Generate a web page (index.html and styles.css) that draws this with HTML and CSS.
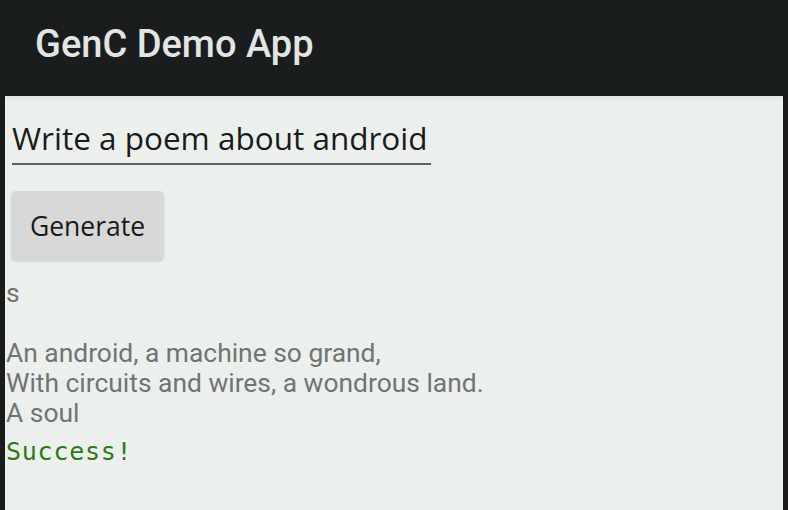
FILE: index.html
```html
<!DOCTYPE html>
<html>
<head>
<meta charset="utf-8">
<link rel="stylesheet" href="styles.css">
</head>
<body>
<header class="appbar"><h1 class="title">GenC Demo App</h1></header>
<main class="screen">
  <div class="field"><span class="field-text">Write a poem about android</span></div>
  <button class="btn">Generate</button>
  <div class="output">s

An android, a machine so grand,
With circuits and wires, a wondrous land.
A soul</div>
  <div class="status">Success!</div>
</main>
</body>
</html>
```
FILE: styles.css
```css
html, body { margin: 0; padding: 0; }
body {
  width: 788px; height: 510px; overflow: hidden;
  background: #1a1c1c;
  display: flex; flex-direction: column;
}
.appbar {
  height: 96px; flex: none;
  background: #191d1e;
  display: flex; align-items: center;
  padding-left: 35px;
  box-sizing: border-box;
}
.title {
  margin: 0;
  font-family: Roboto, sans-serif;
  font-weight: 500;
  font-size: 38px;
  color: #e2e5e3;
  letter-spacing: 0;
  position: relative; top: -4px;
}
.screen {
  flex: 1;
  margin: 0 5px;
  background: linear-gradient(#e1e5e2, #ecf0ed 6px);
  display: flex; flex-direction: column; align-items: flex-start;
}
.field {
  margin: 22px 0 0 7px;
  width: 419px;
  border-bottom: 2px solid #5c615f;
  padding-bottom: 5px;
}
.field-text {
  font-family: "Open Sans", sans-serif;
  font-size: 31.5px;
  color: #191c1b;
  line-height: 40px;
  display: block;
  white-space: nowrap;
}
.btn {
  margin: 26px 0 0 6px;
  width: 153px; height: 70px;
  border: none; border-radius: 5px;
  background: #d7d9d8;
  box-shadow: 0 1px 2px rgba(0,0,0,0.12);
  font-family: "Open Sans", sans-serif;
  font-size: 26.5px;
  color: #181b1a;
  padding: 0;
}
.output {
  margin: 17px 0 0 1px;
  white-space: pre;
  font-family: Roboto, sans-serif;
  font-size: 26.4px;
  line-height: 30px;
  color: #6f7573;
}
.status {
  margin: 9px 0 0 1px;
  font-family: "DejaVu Sans Mono", monospace;
  font-size: 25px;
  letter-spacing: 0.75px;
  color: #2d7a16;
  line-height: 30px;
}
```
